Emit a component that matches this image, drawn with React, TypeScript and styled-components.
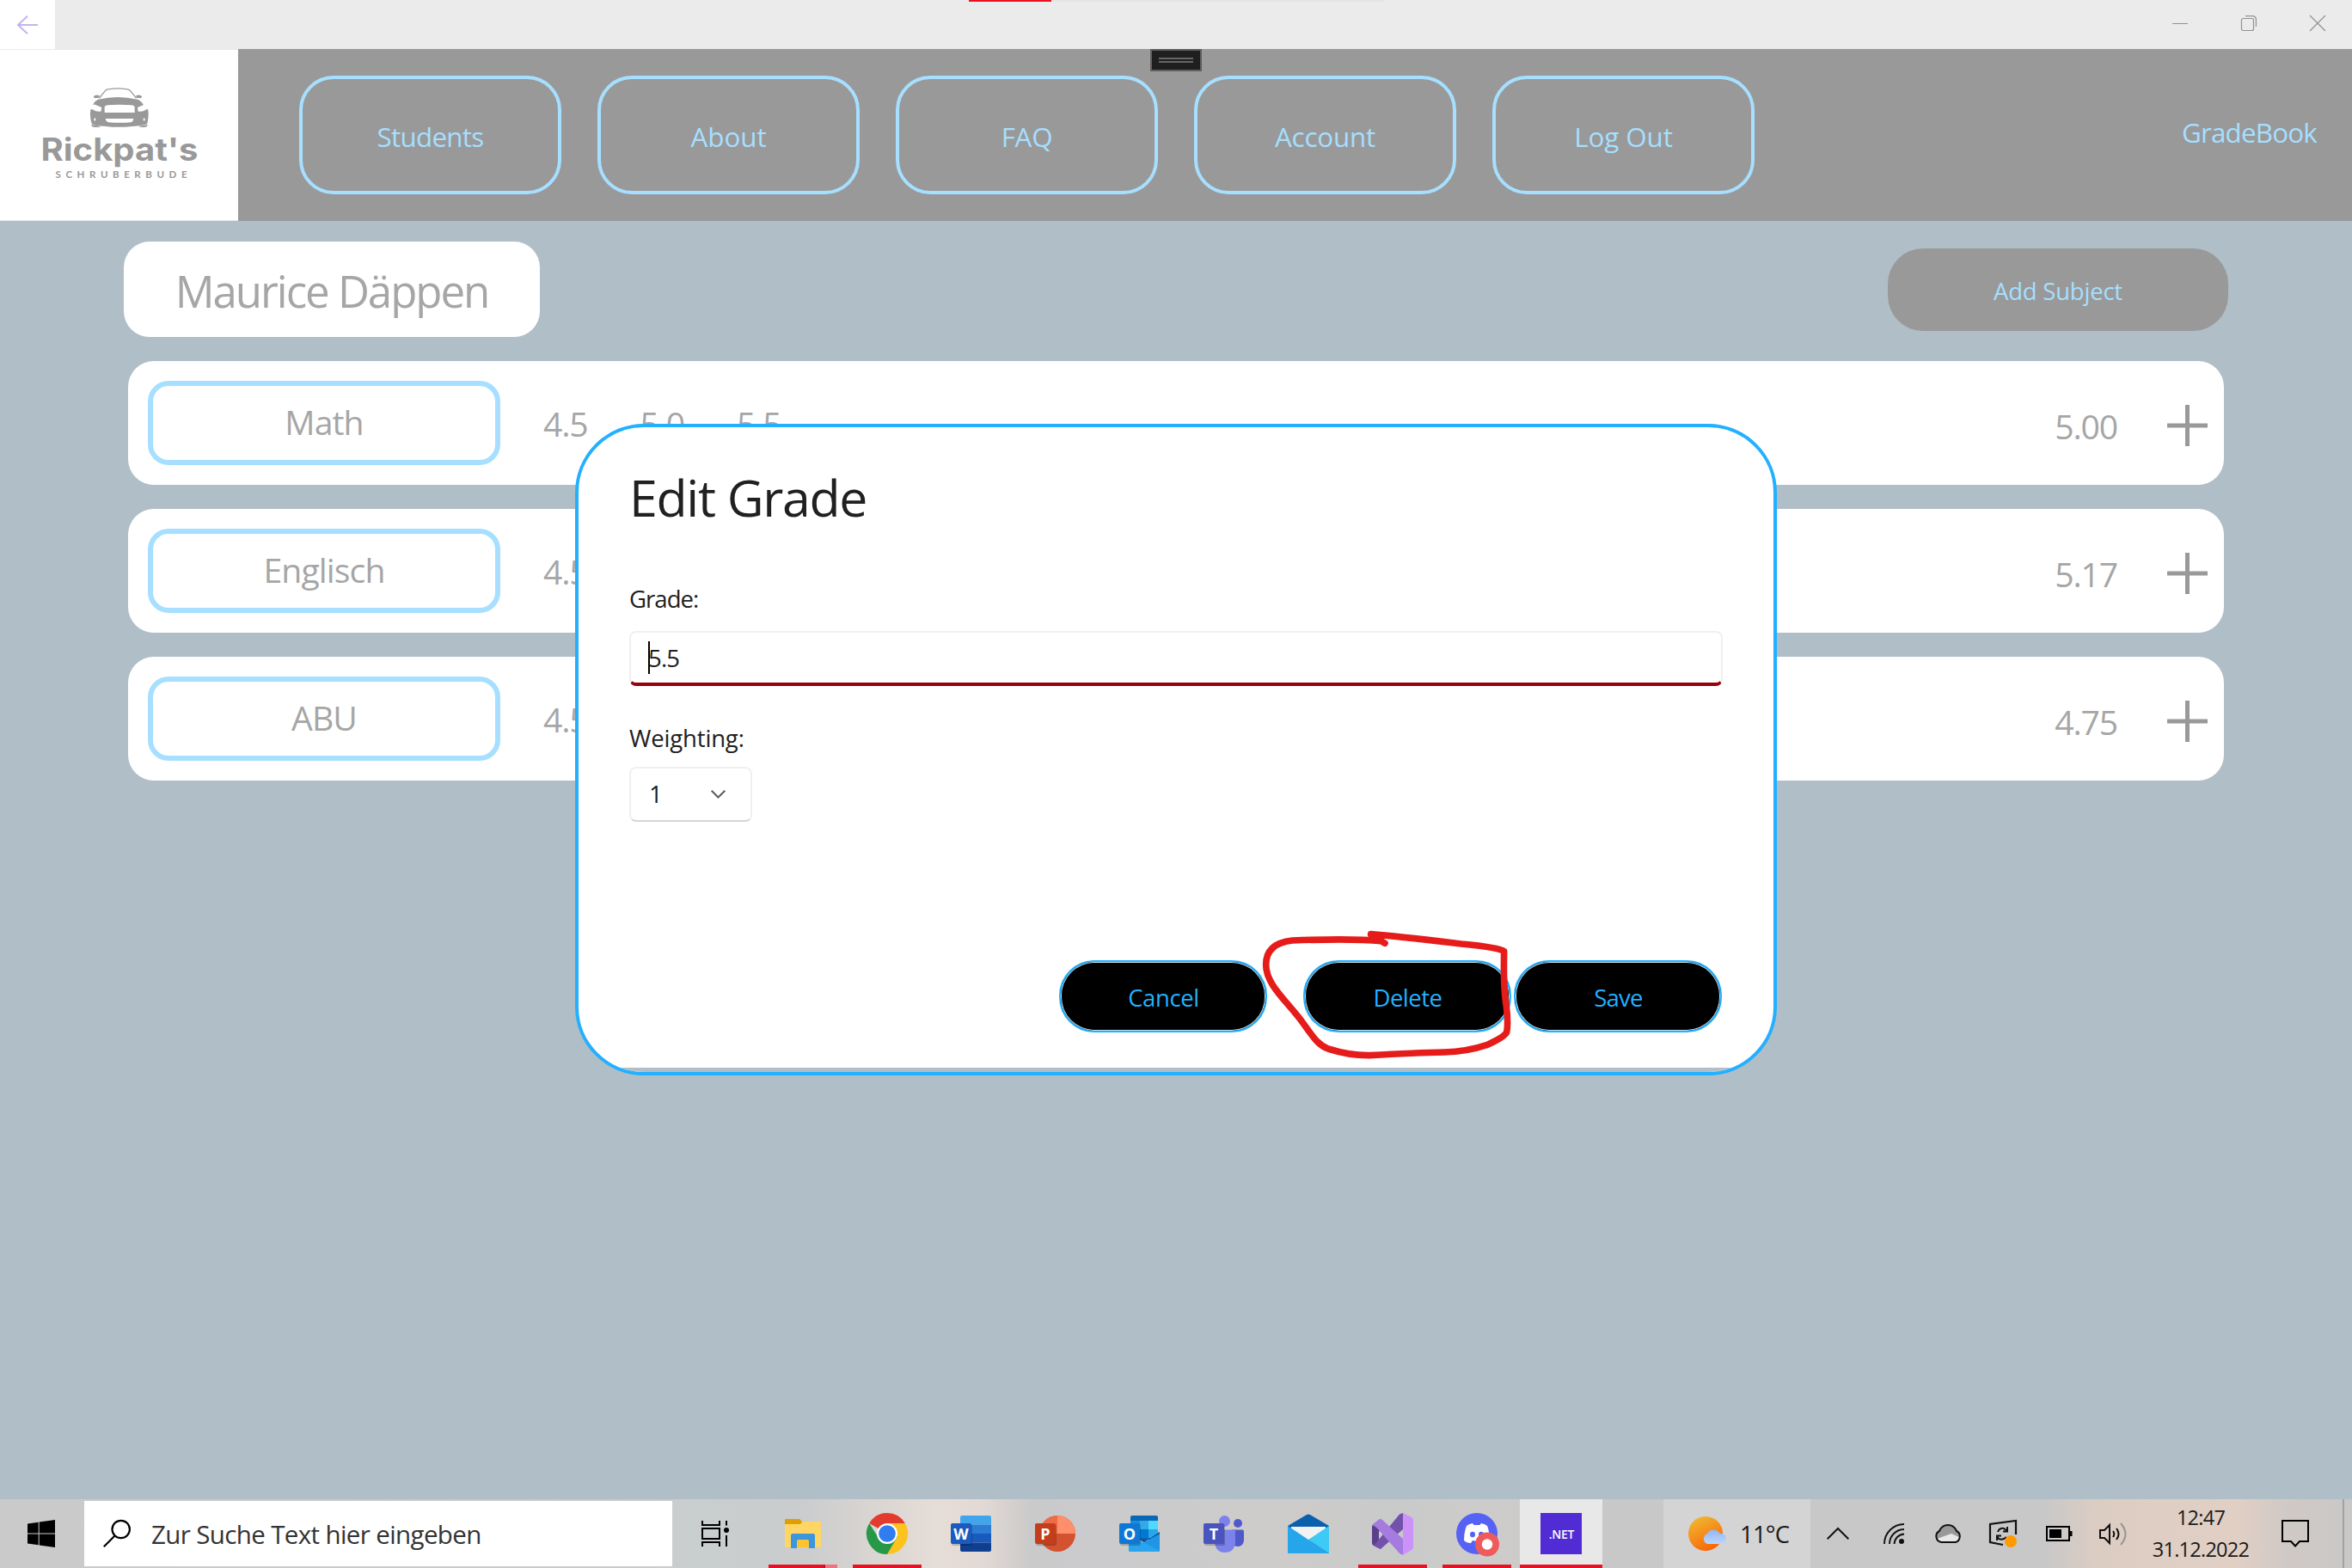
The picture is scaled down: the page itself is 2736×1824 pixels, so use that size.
import React from 'react';
import styled, { createGlobalStyle } from 'styled-components';

const GlobalStyle = createGlobalStyle`
  * { box-sizing: border-box; }
  body {
    margin: 0;
    background: #b0bec7;
    font-family: "Open Sans", "Noto Sans", sans-serif;
  }
  svg { display: block; flex: none; overflow: visible; }
`;

const Screen = styled.div`
  position: relative;
  display: flex;
  flex-direction: column;
  width: 2736px;
  height: 1824px;
  overflow: hidden;
  white-space: nowrap;
`;

/* ---------- window title bar ---------- */

const TitleBar = styled.div`
  display: flex;
  flex: none;
  justify-content: space-between;
  height: 57px;
  background: #ebebeb;
`;

const BackButton = styled.div`
  width: 64px;
  padding: 18px 0 0 20px;
  background: #fff;
`;

const WindowControls = styled.div`
  display: flex;
  gap: 62px;
  padding: 18px 31px 0 0;
`;

const LoadTrack = styled.div`
  position: absolute;
  top: 0;
  left: 1127px;
  width: 482px;
  height: 2px;
  background: linear-gradient(to right, #e81123 96px, #e4e4e4 96px);
`;

const DebugHandle = styled.div`
  position: absolute;
  top: 57px;
  left: 1338px;
  display: flex;
  flex-direction: column;
  justify-content: center;
  gap: 2px;
  width: 60px;
  height: 26px;
  padding: 0 8px;
  border: 2px solid #606060;
  background: #1f1f1f;
`;

const HandleLine = styled.div`
  height: 2px;
  background: #666;
`;

/* ---------- header ---------- */

const Header = styled.header`
  display: flex;
  flex: none;
  align-items: center;
  height: 200px;
  background: #999;
  color: #a6dfff;
  font-size: 31.4px;
`;

const LogoBox = styled.div`
  width: 277px;
  height: 200px;
  background: #fff;
  border-top: 1px solid #ebebeb;
  border-bottom: 1px solid #ebebeb;
`;

const Nav = styled.nav`
  display: flex;
  gap: 42px;
  margin-left: 71px;
`;

const NavButton = styled.div<{ $tracking: number }>`
  display: flex;
  align-items: center;
  justify-content: center;
  width: 305px;
  height: 138px;
  padding-top: 2px;
  border: 4px solid #a6dfff;
  border-radius: 40px;
  letter-spacing: ${p => p.$tracking}em;
`;

const Brand = styled.div`
  margin-left: auto;
  padding: 0 41px 8px 0;
  letter-spacing: -0.026em;
`;

/* ---------- page ---------- */

const Page = styled.main`
  flex: 1;
  padding: 24px 144px 0;
  color: #a6a6a6;
`;

const PageHead = styled.div`
  display: flex;
  justify-content: space-between;
  align-items: center;
  height: 111px;
`;

const StudentName = styled.div`
  display: flex;
  align-items: center;
  justify-content: center;
  width: 484px;
  height: 111px;
  border-radius: 30px;
  background: #fff;
  font-size: 51px;
  letter-spacing: -0.04em;
  padding-top: 2px;
`;

const AddSubject = styled.div`
  display: flex;
  align-items: center;
  justify-content: center;
  width: 396px;
  height: 96px;
  padding-top: 4px;
  border-radius: 41px;
  background: #999;
  color: #a6dfff;
  font-size: 27.5px;
  letter-spacing: -0.008em;
`;

const SubjectList = styled.div`
  display: flex;
  flex-direction: column;
  gap: 28px;
  padding: 28px 5px 0;
`;

const SubjectRow = styled.div`
  display: flex;
  align-items: center;
  height: 144px;
  padding: 0 19px 0 23px;
  border-radius: 30px;
  background: #fff;
  font-size: 39.2px;
  letter-spacing: -0.03em;
`;

const SubjectName = styled.div`
  display: flex;
  align-items: center;
  justify-content: center;
  width: 410px;
  height: 98px;
  padding-bottom: 4px;
  border: 6px solid #a6dfff;
  border-radius: 24px;
  letter-spacing: -0.023em;
`;

const Grades = styled.div`
  display: flex;
  margin-left: 50px;
`;

const Grade = styled.div`
  width: 112.5px;
`;

const Average = styled.div`
  margin: 6px 58px 0 auto;
`;

const PlusBox = styled.div`
  padding-top: 6px;
`;

/* ---------- dialog ---------- */

const Dialog = styled.section`
  position: absolute;
  top: 493px;
  left: 669px;
  width: 1398px;
  height: 758px;
  padding: 41px 60px 0 59px;
  border: 4px solid #22b0ff;
  border-radius: 80px;
  background: linear-gradient(#b0bec7, #b0bec7) bottom / 100% 5px no-repeat padding-box, #fff;
  color: #202020;
  font-size: 27.5px;
  line-height: 40px;
`;

const DialogTitle = styled.div`
  margin-bottom: 58px;
  font-size: 59px;
  line-height: 80px;
  letter-spacing: -0.022em;
`;

const FieldLabel = styled.div<{ $tracking: number }>`
  height: 40px;
  line-height: 42px;
  letter-spacing: ${p => p.$tracking}em;
`;

const TextField = styled.div`
  display: flex;
  align-items: center;
  height: 64px;
  margin: 18px -1px 40px 0;
  padding: 2px 0 0 20px;
  border: 2px solid #f0f0f0;
  border-bottom: 4px solid #99000d;
  border-radius: 8px;
  letter-spacing: -0.03em;
`;

const Caret = styled.div`
  width: 2px;
  height: 38px;
  margin: -2px -2px 0 0;
  background: #000;
`;

const Select = styled.div`
  display: flex;
  align-items: center;
  justify-content: space-between;
  width: 143px;
  height: 64px;
  margin-top: 14px;
  padding: 0 29px 0 21px;
  border: 2px solid #f0f0f0;
  border-bottom-color: #d6d6d6;
  border-radius: 8px;
`;

const Actions = styled.div`
  display: flex;
  justify-content: flex-end;
  margin-top: 161px;
`;

const ActionButton = styled.div<{ $gap?: number; $tracking: number }>`
  display: flex;
  align-items: center;
  justify-content: center;
  width: 242px;
  height: 84px;
  margin-right: ${p => p.$gap ?? 0}px;
  padding: 4px 0 0 1px;
  border: 2px solid #22b0ff;
  border-radius: 41px;
  background: #000;
  box-shadow: inset 0 0 0 1px #c4dfef;
  color: #22b0ff;
  letter-spacing: ${p => p.$tracking}em;
`;

const Annotation = styled.svg`
  position: absolute;
  top: 1074px;
  left: 1460px;
`;

/* ---------- taskbar ---------- */

const Taskbar = styled.footer`
  display: flex;
  flex: none;
  height: 80px;
  background: linear-gradient(to right, #cacaca 0, #cbcbcb 760px, #c9cecf 800px, #cacccd 930px,
    #e6ddd7 1090px, #e3dad5 1140px, #cacaca 1200px, #cbcacd 1260px, #cbcbcb 1360px, #cecccb 1480px, #c8cac9 1620px,
    #cecccb 1730px, #c8c8c8 1870px, #c8c8c8 2200px, #c9c8c8 2380px, #dccdc3 2440px, #e1cfc4 2600px,
    #d0c9c6 2660px, #c9c8c7 2736px);
  color: #1a1a1a;
`;

const StartButton = styled.div`
  display: flex;
  align-items: center;
  width: 98px;
  padding-left: 32px;
`;

const Search = styled.div`
  display: flex;
  align-items: center;
  gap: 24px;
  width: 684px;
  height: 76px;
  margin-top: 2px;
  padding-left: 22px;
  background: #fff;
  color: #333;
  font-size: 29.5px;
  letter-spacing: -0.021em;
`;

const Slot = styled.div<{ $w?: number; $active?: boolean; $open?: boolean; $stacked?: boolean }>`
  position: relative;
  display: flex;
  align-items: center;
  justify-content: center;
  width: ${p => p.$w ?? 98}px;
  height: 80px;
  background: ${p => (p.$active ? '#e9e8e8' : 'transparent')};
  background-clip: content-box;
  padding: 0 ${p => (p.$active ? 1 : 0)}px;
  &::after {
    content: '';
    position: absolute;
    bottom: 0;
    left: ${p => (p.$active ? 1 : 9)}px;
    right: ${p => (p.$active ? 1 : 9)}px;
    height: 4px;
    background: ${p =>
      p.$stacked
        ? 'linear-gradient(to right, #e81123 64px, #c50f20 64px, #c50f20 66px, #f0737d 66px)'
        : p.$open || p.$active
          ? '#e81123'
          : 'transparent'};
  }
`;

const TaskViewSlot = styled(Slot)`
  margin-right: 3px;
`;

const Weather = styled.div`
  display: flex;
  align-items: center;
  gap: 14px;
  width: 171px;
  margin-left: 70px;
  padding-left: 29px;
  background: rgba(255, 255, 255, 0.22);
  font-size: 27.5px;
  letter-spacing: -0.03em;
`;

const Clock = styled.div`
  width: 140px;
  padding-top: 3px;
  font-size: 23.5px;
  line-height: 37px;
  letter-spacing: -0.032em;
  text-align: center;
`;

const DesktopEdge = styled.div`
  width: 2px;
  height: 80px;
  margin-left: 16px;
  background: #a3a09e;
`;

/* ---------- drawings ---------- */

const Logo = () => (
  <svg width="277" height="198" viewBox="0 1 277 198">
    <g transform="translate(40 38) scale(.33333)" fill="#999">
      <path d="M226 58L247 32Q252 26 262 26Q291 21 320 26Q330 26 335 32L356 58" fill="none" stroke="#999" strokeWidth="4" />
      <path d="M216 52Q219 46 228 47L236 49L230 57H219Q215 56 216 52ZM366 52Q363 46 354 47L346 49L352 57H363Q367 56 366 52Z" transform="translate(291 0) scale(1.12 1) translate(-291 0)" />
      <path d="M204 80Q212 66 222 62Q291 46 360 62Q372 66 380 80Q394 86 397 96Q400 126 393 148Q380 155 340 156Q291 161 250 156Q208 155 201 148Q192 126 196 96Q198 86 204 80Z" />
      <path d="M198 150L232 156Q228 160 214 159Q200 160 198 150ZM396 150L364 156Q368 160 380 159Q394 160 396 150Z" />
      <path d="M195 83Q206 78 214 81L235 90L232 104Q220 105 212 102L202 96L196 98Z" fill="#fff" />
      <path d="M400 83Q388 78 381 81L360 90L362 104Q374 105 382 102L392 96L399 98Z" fill="#fff" />
      <path d="M245 87Q249 83 256 82Q297 78 338 82Q347 83 350 87V108H245Z" fill="#fff" />
      <path d="M248 129H346Q344 140 337 142Q297 145 259 142Q250 140 248 129Z" fill="#fff" />
      <ellipse cx="211" cy="132" rx="3" ry="5" fill="#fff" />
      <ellipse cx="383" cy="132" rx="3" ry="5" fill="#fff" />
    </g>
    <text x="47.500" y="130" textLength="183" lengthAdjust="spacingAndGlyphs" fontFamily="Inter" fontSize="37" fontWeight="700" fill="#999">Rickpat's</text>
    <text x="64.500" y="150" textLength="153" fontFamily="Lato" fontSize="11.5" fontWeight="700" fill="#999">SCHRUBERBUDE</text>
  </svg>
);

const Plus = () => (
  <svg width="47" height="48" viewBox="0 0 47 48">
    <path d="M23.5 0V48M0 24H47" stroke="#999" strokeWidth="5" />
  </svg>
);

const SearchIcon = () => (
  <svg width="32" height="32" viewBox="0 0 32 32" fill="none" stroke="#000" strokeWidth="2.2">
    <circle cx="20.7" cy="11" r="10.2" />
    <path d="M13.5 18.5L.8 31.3" />
  </svg>
);

const TaskViewIcon = () => (
  <svg width="32" height="30" viewBox="0 0 32 30" fill="none" stroke="#000" strokeWidth="2">
    <path d="M1 0V5H21V0M1 30V25H21V30M1 9H21V21H1ZM29 0V5.5M29 17V30" />
    <circle cx="29" cy="11" r="3" fill="#000" stroke="none" />
  </svg>
);

const ExplorerIcon = () => (
  <svg width="42" height="34" viewBox="0 0 42 34">
    <path d="M0 1Q0 0 1 0H16Q18 0 19 2L20 6H0Z" fill="#dd9f04" />
    <path d="M0 6H17Q19 6 21 3H41Q42 3 42 4V32Q42 33 41 33H1Q0 33 0 32Z" fill="#ffd563" />
    <path d="M14 24H28V33H14Z" fill="#fdc42f" />
    <path d="M7 34V19Q7 17 9 17H33Q35 17 35 19V34H28V26Q28 24 26 24H16Q14 24 14 26V34Z" fill="#3c96dd" />
  </svg>
);

const ChromeIcon = () => (
  <svg width="48" height="48" viewBox="0 0 48 48">
    <path d="M24 24L3.2 12A24 24 0 0 1 44.8 12Z" fill="#e33b2e" />
    <path d="M24 24L44.8 12A24 24 0 0 1 24 48L33 29Z" fill="#fcc31e" />
    <path d="M24 24L36 27.5L24 48A24 24 0 0 1 3.2 12L14 29Z" fill="#279847" />
    <path d="M24 12H44.8L34 26Z" fill="#fcc31e" />
    <circle cx="24" cy="24" r="12" fill="#fff" />
    <circle cx="24" cy="24" r="9.8" fill="#307cf1" />
  </svg>
);

const Tile = ({ letter, color }: { letter: string; color: string }) => (
  <g>
    <rect x="1" y="10" width="24" height="25" rx="2" fill="#000" opacity=".2" />
    <rect x="0" y="9" width="24" height="24" rx="2" fill={color} />
    <text x="12" y="27.5" textAnchor="middle" fontFamily="Open Sans" fontWeight="700" fontSize="18" fill="#fff">{letter}</text>
  </g>
);

const WordIcon = () => (
  <svg width="48" height="42" viewBox="0 0 48 42">
    <path d="M11 10.500V2Q11 0 13 0H45Q47 0 47 2V10.500Z" fill="#41a5ee" />
    <path d="M11 10.500H47V21H11Z" fill="#2b7cd3" />
    <path d="M11 21H47V31.500H11Z" fill="#185abd" />
    <path d="M11 31.500H47V40Q47 42 45 42H13Q11 42 11 40Z" fill="#103f91" />
    <Tile letter="W" color="#1b5abe" />
  </svg>
);

const PowerPointIcon = () => (
  <svg width="48" height="42" viewBox="0 0 48 42">
    <circle cx="26" cy="21" r="21" fill="#d35230" />
    <path d="M5 21A21 21 0 0 1 26 0V21Z" fill="#ed6c47" />
    <path d="M26 0A21 21 0 0 1 47 21H26Z" fill="#ff8f6b" />
    <Tile letter="P" color="#c43e1c" />
  </svg>
);

const OutlookIcon = () => (
  <svg width="48" height="42" viewBox="0 0 48 42">
    <path d="M13 2Q13 0 15 0H43Q45 0 45 2V28H13Z" fill="#0a67b5" />
    <path d="M13 6H24V16H13Z" fill="#1490df" />
    <path d="M24 6H34V16H24Z" fill="#32a9e8" />
    <path d="M34 6H45V16H34Z" fill="#50d9ff" />
    <path d="M24 16H34V26H24Z" fill="#0078d4" />
    <path d="M34 16H45V26H34Z" fill="#28a8ea" />
    <path d="M13 23L29 31L47 19V28H13Z" fill="#0a4a8c" />
    <path d="M11 22L47 42H13Q11 42 11 40Z" fill="#28a8ea" />
    <path d="M47 21V40Q47 42 45 42H14L28 31.500Z" fill="#1f95e6" />
    <path d="M28 31L47 41Q46 42 45 42H13Q11 42 11 40V30Z" fill="#2aa4ee" />
    <Tile letter="O" color="#0f78d4" />
  </svg>
);

const TeamsIcon = () => (
  <svg width="48" height="43" viewBox="0 0 48 43">
    <circle cx="40" cy="9" r="5" fill="#5059c9" />
    <path d="M33 16.500H45Q47 16.500 47 18.500V29Q46 36 40 36Q35 36 33 32Z" fill="#5059c9" />
    <circle cx="24.500" cy="6.500" r="6.500" fill="#7b83eb" />
    <path d="M13 16.500H35Q37 16.500 37 18.500V31Q36 43 25 43Q14 43 13 31Z" fill="#7b83eb" />
    <Tile letter="T" color="#4b53bc" />
  </svg>
);

const MailIcon = () => (
  <svg width="48" height="46" viewBox="0 0 48 46">
    <path d="M0 14L22 1Q24 0 26 1L48 14V20H0Z" fill="#0b60ae" />
    <path d="M4 15H44V24L24 36L4 24Z" fill="#f2f2f2" />
    <path d="M48 14L24 30L48 46Z" fill="#3bcbf5" />
    <path d="M24 30L0 46H48Z" fill="#1590e0" />
    <path d="M0 14L48 46H0Z" fill="#25a6ea" />
  </svg>
);

const VisualStudioIcon = () => (
  <svg width="48" height="49" viewBox="0 0 48 49">
    <path d="M0 15L8 22V34L10 42L2 38Q0 37 0 35Z" fill="#5b3f8c" />
    <path d="M0 15L10 7V19L8 22V34L0 35Z" fill="#5b3f8c" />
    <path d="M2 38L10 42L36 19V0L32 1.500Z" fill="#7252aa" />
    <path d="M0 14L8 7.500Q10 6.500 12 8L36 30V49L32 47L8 20Q4 15 0 14Z" fill="#a67be0" />
    <path d="M36 0L46 5Q48 6 48 8V40Q48 42 46 43L36 49Z" fill="#cb93f8" />
  </svg>
);

const DiscordIcon = () => (
  <svg width="48" height="48" viewBox="0 0 48 48">
    <circle cx="24" cy="24" r="24" fill="#5662f6" />
    <path d="M19 12Q14 13 12 15Q9 22 9 32Q12 35 17 35L19 32Q24 33 29 32L31 35Q36 35 39 32Q39 22 36 15Q34 13 29 12L27.500 14H20.500Z" fill="#fff" />
    <ellipse cx="19" cy="25" rx="3" ry="3.300" fill="#5662f6" />
    <ellipse cx="29" cy="25" rx="3" ry="3.300" fill="#5662f6" />
    <circle cx="36" cy="36.500" r="14" fill="#ef5b5b" />
    <circle cx="36" cy="36.500" r="6.200" fill="#fff" />
  </svg>
);

const NetIcon = () => (
  <svg width="48" height="48" viewBox="0 0 48 48">
    <rect width="48" height="48" fill="#512bd4" />
    <text x="24.500" y="29.500" textAnchor="middle" fontFamily="Open Sans" fontWeight="600" fontSize="14" letterSpacing="-.3" fill="#fff">.NET</text>
  </svg>
);

const WeatherIcon = () => (
  <svg width="46" height="40" viewBox="0 0 46 40">
    <defs>
      <linearGradient id="sun" x1="0" y1="0" x2=".5" y2="1">
        <stop offset="0" stopColor="#efc032" />
        <stop offset="1" stopColor="#f96a0c" />
      </linearGradient>
      <linearGradient id="cloud" x1="0" y1="0" x2="0" y2="1">
        <stop offset="0" stopColor="#94b4f2" />
        <stop offset="1" stopColor="#bcd7fd" />
      </linearGradient>
    </defs>
    <circle cx="20" cy="20" r="20" fill="url(#sun)" />
    <path d="M22 32A6.500 6.500 0 0 1 22 20A8 8 0 0 1 36.500 20A6 6 0 0 1 39 32Z" fill="url(#cloud)" />
  </svg>
);

const SyncIcon = () => (
  <svg width="32" height="32" viewBox="0 0 32 32" fill="none" stroke="#111" strokeWidth="2.200">
    <path d="M16 29L1 26V5L31 1V17" />
    <path d="M10 14Q12 9 17 10L21 13M21 8V13.500H16M20 20Q16 24 11 22L9 19M9 24V18.500H14" strokeWidth="2" />
    <circle cx="25" cy="25" r="7" fill="#ff9a00" stroke="none" />
  </svg>
);

const WifiIcon = () => (
  <svg width="24" height="24" viewBox="0 0 24 24" fill="none" stroke="#111" strokeWidth="1.900">
    <path d="M1 24A23 23 0 0 1 24 1M7 24A17 17 0 0 1 24 7M12.500 24A12 12 0 0 1 24 12.500" />
    <circle cx="21" cy="21" r="3" fill="#111" stroke="none" />
  </svg>
);

const CloudIcon = () => (
  <svg width="32" height="22" viewBox="0 0 32 22">
    <path d="M8 21A7 7 0 0 1 6 8Q9 1 16 1Q23 1 26 8A7 7 0 0 1 24.500 21Z" fill="#999" />
    <path d="M8 21A7 7 0 0 1 3 17L20 11L31 16Q30 21 24.500 21Z" fill="#e8e8e8" />
    <path d="M8 21A7 7 0 0 1 6 8Q9 1 16 1Q23 1 26 8A7 7 0 0 1 24.500 21Z" fill="none" stroke="#111" strokeWidth="2" />
  </svg>
);

const BatteryIcon = () => (
  <svg width="31" height="18" viewBox="0 0 31 18">
    <path d="M1 1H27V17H1Z" fill="none" stroke="#000" strokeWidth="2" />
    <path d="M4 4H18V14H4ZM28 6H30.500V12H28Z" />
  </svg>
);

const VolumeIcon = () => (
  <svg width="33" height="27" viewBox="0 0 33 27" fill="none" stroke="#111" strokeWidth="2">
    <path d="M1 9H6L12 3V24L6 18H1Z" />
    <path d="M16 10Q18.500 13.500 16 17M20 7Q25 13.500 20 20" />
    <path d="M25 1Q36 13.500 25 26" stroke="#9a9492" />
  </svg>
);

const navItems = [
  { label: 'Students', tracking: -0.024 },
  { label: 'About', tracking: -0.002 },
  { label: 'FAQ', tracking: -0.01 },
  { label: 'Account', tracking: -0.006 },
  { label: 'Log Out', tracking: -0.003 },
];

const subjects = [
  { name: 'Math', grades: ['4.5', '5.0', '5.5'], average: '5.00' },
  { name: 'Englisch', grades: ['4.5'], average: '5.17' },
  { name: 'ABU', grades: ['4.5'], average: '4.75' },
];

export default function App() {
  return (
    <>
      <GlobalStyle />
      <Screen>
        <TitleBar>
          <BackButton>
            <svg width="24" height="22" viewBox="0 0 24 22" fill="none" stroke="#c3b4ef" strokeWidth="2">
              <path d="M24 11H1M12 .7L1 11L12 21.300" />
            </svg>
          </BackButton>
          <WindowControls>
            <svg width="18" height="18" viewBox="0 0 18 18"><path d="M0 9.500H18" stroke="#929292" /></svg>
            <svg width="18" height="18" viewBox="0 0 18 18" fill="none" stroke="#929292" strokeWidth="1.200">
              <rect x=".5" y="3.500" width="14" height="14" rx="2" />
              <path d="M5 .6H13Q17.400 .6 17.400 5V13" />
            </svg>
            <svg width="18" height="18" viewBox="0 0 18 18"><path d="M0 0L18 18M18 0L0 18" stroke="#929292" strokeWidth="1.200" /></svg>
          </WindowControls>
        </TitleBar>
        <LoadTrack />

        <Header>
          <LogoBox><Logo /></LogoBox>
          <Nav>
            {navItems.map(n => <NavButton key={n.label} $tracking={n.tracking}>{n.label}</NavButton>)}
          </Nav>
          <Brand>GradeBook</Brand>
        </Header>
        <DebugHandle><HandleLine /><HandleLine /></DebugHandle>

        <Page>
          <PageHead>
            <StudentName>Maurice Däppen</StudentName>
            <AddSubject>Add Subject</AddSubject>
          </PageHead>
          <SubjectList>
            {subjects.map(s => (
              <SubjectRow key={s.name}>
                <SubjectName>{s.name}</SubjectName>
                <Grades>{s.grades.map(g => <Grade key={g}>{g}</Grade>)}</Grades>
                <Average>{s.average}</Average>
                <PlusBox><Plus /></PlusBox>
              </SubjectRow>
            ))}
          </SubjectList>
        </Page>

        <Dialog>
          <DialogTitle>Edit Grade</DialogTitle>
          <FieldLabel $tracking={-0.034}>Grade:</FieldLabel>
          <TextField><Caret />5.5</TextField>
          <FieldLabel $tracking={-0.006}>Weighting:</FieldLabel>
          <Select>
            1
            <svg width="17" height="10" viewBox="0 0 17 10"><path d="M.7 .7L8.500 8.500L16.300 .7" fill="none" stroke="#5c5c5c" strokeWidth="2" /></svg>
          </Select>
          <Actions>
            <ActionButton $gap={42} $tracking={-0.014}>Cancel</ActionButton>
            <ActionButton $gap={3} $tracking={-0.018}>Delete</ActionButton>
            <ActionButton $tracking={-0.028}>Save</ActionButton>
          </Actions>
        </Dialog>

        <Annotation width="310" height="166" viewBox="0 0 930 498" fill="none" stroke="#e61c1b" strokeWidth="23" strokeLinecap="round" strokeLinejoin="round">
          <path d="M453 70L440 62Q340 52 130 60Q38 70 38 145C38 215 110 270 165 345C205 400 220 425 255 438Q330 462 400 461Q560 452 660 450Q740 448 808 425Q870 398 878 380Q884 350 877 290Q866 230 869 98Q850 84 720 72C600 58 500 46 404 38" />
        </Annotation>

        <Taskbar>
          <StartButton>
            <svg width="32" height="32" viewBox="0 0 32 32">
              <path d="M0 4.500L12.700 2.700V15.400H0ZM13.700 2.500L32 0V15.400H13.700ZM0 16.400H12.700V29.300L0 27.500ZM13.700 16.400H32V32L13.700 29.500Z" />
            </svg>
          </StartButton>
          <Search><SearchIcon />Zur Suche Text hier eingeben</Search>
          <TaskViewSlot $w={100}><TaskViewIcon /></TaskViewSlot>
          <Slot $open $stacked><ExplorerIcon /></Slot>
          <Slot $open><ChromeIcon /></Slot>
          <Slot><WordIcon /></Slot>
          <Slot><PowerPointIcon /></Slot>
          <Slot><OutlookIcon /></Slot>
          <Slot><TeamsIcon /></Slot>
          <Slot><MailIcon /></Slot>
          <Slot $open><VisualStudioIcon /></Slot>
          <Slot $open><DiscordIcon /></Slot>
          <Slot $active><NetIcon /></Slot>
          <Weather><WeatherIcon />11°C</Weather>
          <Slot $w={64}>
            <svg width="26" height="14" viewBox="0 0 26 14"><path d="M.7 13.300L13 1L25.300 13.300" fill="none" stroke="#111" strokeWidth="2" /></svg>
          </Slot>
          <Slot $w={66}><WifiIcon /></Slot>
          <Slot $w={60}><CloudIcon /></Slot>
          <Slot $w={68}><SyncIcon /></Slot>
          <Slot $w={62}><BatteryIcon /></Slot>
          <Slot $w={64}><VolumeIcon /></Slot>
          <Clock>12:47<br />31.12.2022</Clock>
          <Slot $w={79}>
            <svg width="32" height="32" viewBox="0 0 32 32"><path d="M1 1H31V25H21L16 30.500L11 25H1Z" fill="none" stroke="#000" strokeWidth="2" /></svg>
          </Slot>
          <DesktopEdge />
        </Taskbar>
      </Screen>
    </>
  );
}
